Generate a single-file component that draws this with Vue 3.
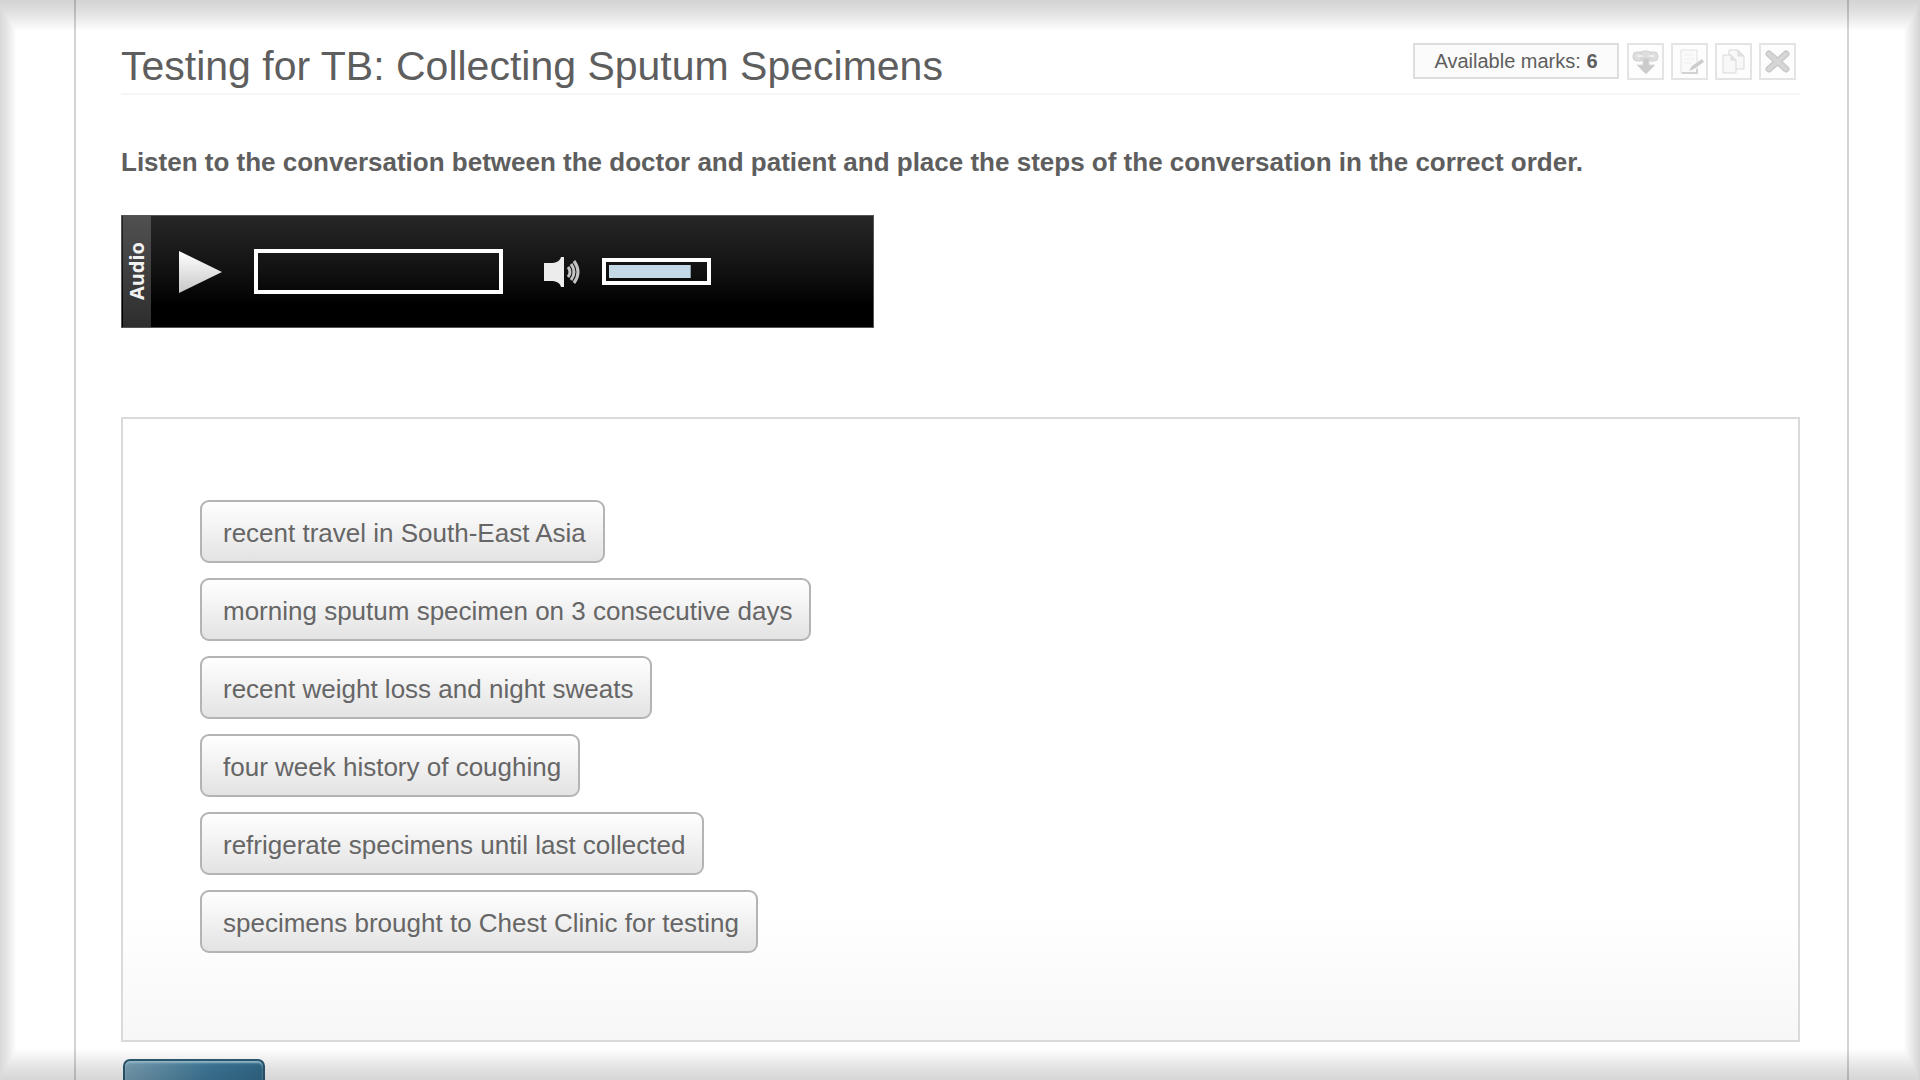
<script setup>
import { ref } from 'vue'

const position = ref(0)
const volume = ref(86)
const steps = ref([
  'recent travel in South-East Asia',
  'morning sputum specimen on 3 consecutive days',
  'recent weight loss and night sweats',
  'four week history of coughing',
  'refrigerate specimens until last collected',
  'specimens brought to Chest Clinic for testing',
])
</script>

<template>
  <div class="page">
    <main class="sheet">
      <header class="header">
        <h1>Testing for TB: Collecting Sputum Specimens</h1>
        <div class="tools">
          <p class="marks">Available marks: <strong>6</strong></p>
          <button class="tool" type="button" aria-label="Move down">
            <svg viewBox="0 0 33 33">
              <g fill="#dedede" stroke="#d0d0d0">
                <rect x="4" y="7" width="12" height="9" rx="4" />
                <rect x="17" y="7" width="12" height="9" rx="4" />
                <rect x="11" y="6" width="11" height="9" rx="4" />
              </g>
              <path d="M8 11h5M20 11h5" stroke="#f0f0f0" stroke-width="2" />
              <path d="M14 13h6v7h6l-9 9-9-9h6z" fill="#cbcbcb" stroke="#dadada" />
            </svg>
          </button>
          <button class="tool" type="button" aria-label="Edit">
            <svg viewBox="0 0 33 33">
              <path d="M8 5h16v23H8z" fill="#fafafa" stroke="#e2e2e2" />
              <path d="M11 10h10M11 14h10M11 18h8" stroke="#efefef" />
              <path d="M9 28h15v-4" fill="none" stroke="#d2d2d2" stroke-width="2" />
              <path d="M16 26l3-5 10-7 2 3-10 7z" fill="#cccccc" />
            </svg>
          </button>
          <button class="tool" type="button" aria-label="Copy">
            <svg viewBox="0 0 33 33" fill="#f8f8f8" stroke="#d9d9d9">
              <path d="M12 5h9l6 6v13H12z" />
              <path d="M21 5v6h6" fill="#e4e4e4" />
              <path d="M6 10h8l5 5v13H6z" />
              <path d="M14 10v5h5" fill="#e4e4e4" />
            </svg>
          </button>
          <button class="tool" type="button" aria-label="Remove">
            <svg viewBox="0 0 33 33" fill="none" stroke-linecap="round">
              <path d="M8 9l17 15M25 9L8 24" stroke="#c9c9c9" stroke-width="7" />
              <path d="M8 9l17 15M25 9L8 24" stroke="#d6d6d6" stroke-width="4" />
            </svg>
          </button>
        </div>
      </header>

      <p class="instruction">Listen to the conversation between the doctor and patient and place the steps of the conversation in the correct order.</p>

      <section class="player" aria-labelledby="player-label">
        <h2 id="player-label" class="player-label">Audio</h2>
        <button class="play" type="button" aria-label="Play">
          <svg viewBox="0 0 43 42">
            <defs>
              <linearGradient id="metal" x1="0" y1="0" x2="0" y2="1">
                <stop offset="0" stop-color="#fff" />
                <stop offset="1" stop-color="#c8c8c8" />
              </linearGradient>
            </defs>
            <path d="M0 0l43 21L0 42z" fill="url(#metal)" />
          </svg>
        </button>
        <input v-model="position" class="slider seek" type="range" min="0" max="100" aria-label="Position" :style="{ '--fill': position + '%' }" />
        <button class="speaker" type="button" aria-label="Mute">
          <svg viewBox="0 0 36 30" fill="none">
            <path d="M0 6h9Q16 5 17 0h3v30h-3Q16 25 9 24H0z" fill="#ececec" />
            <path d="M24 10q4 5 0 10M27 7q6 8 0 16M30 4q8 11 0 22" stroke="#c4c4c4" stroke-width="3" />
          </svg>
        </button>
        <input v-model="volume" class="slider volume" type="range" min="0" max="100" aria-label="Volume" :style="{ '--fill': volume + '%' }" />
      </section>

      <section class="board">
        <ol class="steps">
          <li v-for="step in steps" :key="step">
            <button class="step" type="button" draggable="true">{{ step }}</button>
          </li>
        </ol>
      </section>

      <button class="submit" type="button" aria-label="Submit"></button>
    </main>
    <div class="vignette"></div>
  </div>
</template>

<style>
body {
  background: #fff;
}
</style>

<style scoped>
* {
  box-sizing: border-box;
}

.page {
  height: 100vh;
  overflow: hidden;
  color: #5e5e5e;
  font-family: "Liberation Sans", Arial, sans-serif;
}

button {
  margin: 0;
  padding: 0;
  border: 0;
  background: none;
  color: inherit;
  font: inherit;
}

svg {
  display: block;
  width: 100%;
  height: 100%;
}

.sheet {
  min-height: 100vh;
  margin: 0 71px 0 74px;
  padding: 0 47px 0 45px;
  border: solid #d3d3d3;
  border-width: 0 2px;
}

.header {
  display: flex;
  align-items: flex-start;
  justify-content: space-between;
  height: 95px;
  padding: 43px 4px 0 0;
  border-bottom: 2px solid #f6f6f6;
}

h1 {
  margin: 0;
  font-size: 41px;
  font-weight: 400;
  line-height: 46px;
}

.tools {
  display: flex;
  gap: 7px;
}

.marks {
  width: 206px;
  height: 36px;
  margin: 0 1px 0 0;
  border: 2px solid #dedede;
  background: #fbfbfb;
  font-size: 20px;
  line-height: 33px;
  text-align: center;
}

.tool {
  width: 37px;
  height: 37px;
  border: 2px solid #e4e4e4;
  background: #fdfdfd;
}

.instruction {
  margin: 52px 0 0;
  font-size: 26px;
  font-weight: 700;
  line-height: 30px;
}

.player {
  display: flex;
  align-items: center;
  width: 753px;
  max-width: 100%;
  height: 113px;
  margin-top: 38px;
  border: 1px solid #555;
  background: linear-gradient(#272727, #111 50%, #000 80%);
}

.player-label {
  width: 28px;
  height: 100%;
  margin: 0 0 0 1px;
  background: linear-gradient(to top, #505050, #2e2e2e);
  color: #f2f2f2;
  font-family: "Noto Sans", sans-serif;
  font-size: 20px;
  font-weight: 700;
  line-height: 28px;
  text-align: center;
  writing-mode: vertical-rl;
  transform: rotate(180deg);
}

.play {
  width: 43px;
  height: 42px;
  margin-left: 28px;
}

.slider {
  margin: 0;
  border: 4px solid #fff;
  appearance: none;
  background: linear-gradient(#c3d9e7, #c3d9e7) no-repeat content-box 0 0 / var(--fill) 100%;
}

.slider::-webkit-slider-thumb {
  width: 1px;
  height: 1px;
  appearance: none;
}

.seek {
  width: 249px;
  height: 45px;
  margin-left: 32px;
  padding: 3px;
}

.speaker {
  width: 36px;
  height: 30px;
  margin-left: 41px;
}

.volume {
  width: 109px;
  height: 27px;
  margin-left: 22px;
  padding: 3px;
}

.board {
  margin-top: 89px;
  padding: 81px 77px 87px;
  border: 2px solid #dadada;
  background: linear-gradient(#fff 80%, #f7f7f7);
}

.steps {
  display: flex;
  flex-direction: column;
  align-items: flex-start;
  gap: 15px;
  margin: 0;
  padding: 0;
  list-style: none;
}

.step {
  display: block;
  height: 63px;
  padding: 3px 17px 0 21px;
  border: 2px solid #b4b4b4;
  border-radius: 9px;
  background: linear-gradient(#fff, #e3e3e3);
  color: #666;
  font-size: 26px;
}

.submit {
  display: block;
  width: 142px;
  height: 56px;
  margin: 17px 0 0 2px;
  border: 2px solid #2b5a74;
  border-radius: 7px;
  background: linear-gradient(100deg, #7ea6bb, #3f7d9f 60%, #326c8c);
  box-shadow: inset 0 2px 2px #9cc4d4;
}

.vignette {
  position: fixed;
  inset: 0;
  pointer-events: none;
  mix-blend-mode: multiply;
  background-color: #fff;
  background-image:
    linear-gradient(to bottom, #d3d3d3, #e0e0e0 12px, #fff 31px),
    linear-gradient(to top, #d6d6d6, #e2e2e2 12px, #fff 31px),
    linear-gradient(to right, #d8d8d8, #e6e6e6 7px, #fff 17px),
    linear-gradient(to left, #d3d3d3, #e6e6e6 7px, #fff 17px);
  background-blend-mode: darken;
}
</style>
